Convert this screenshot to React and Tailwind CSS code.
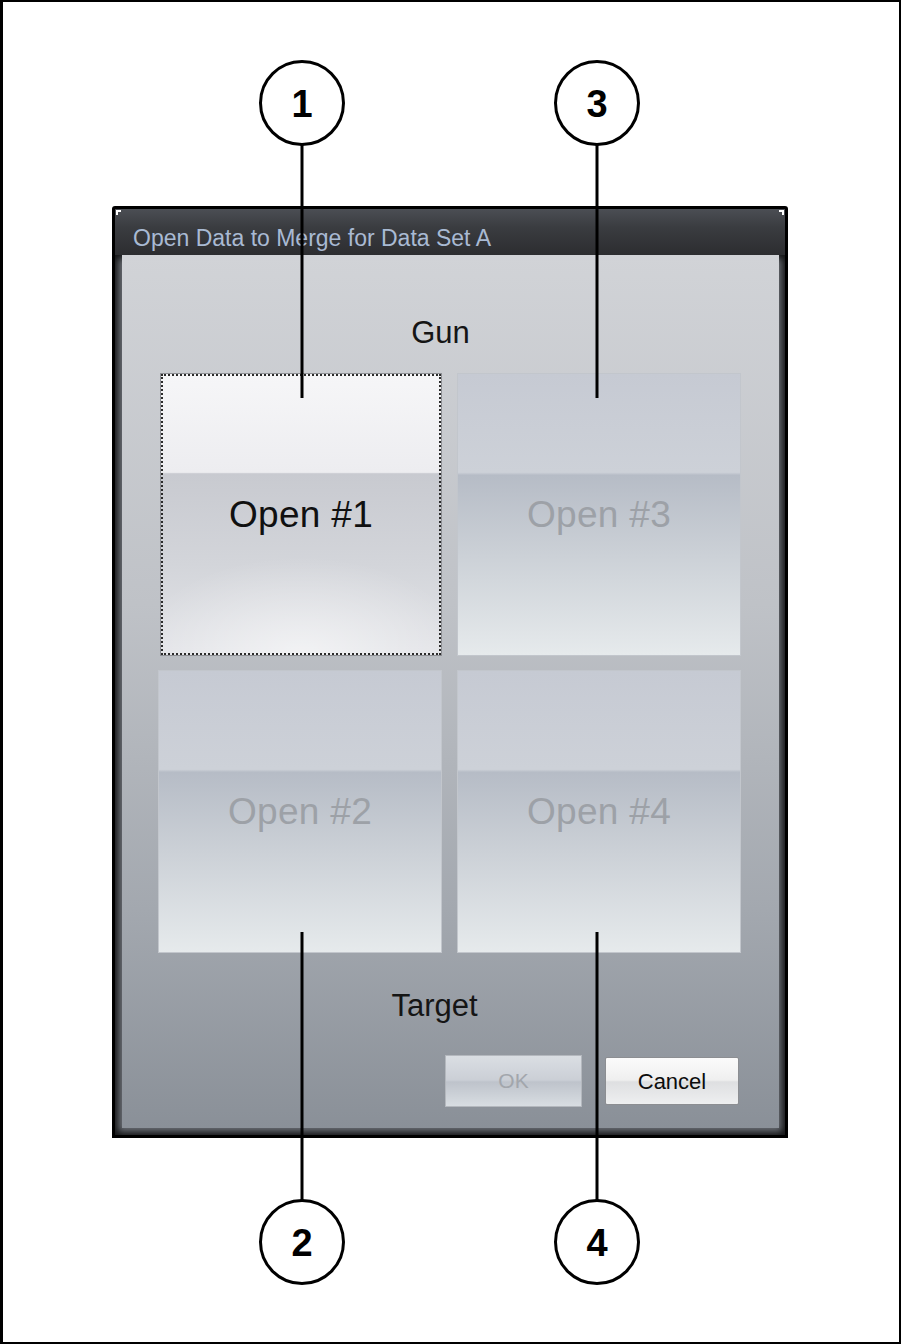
import React from "react";

const font = { fontFamily: '"Liberation Sans", Arial, sans-serif' };

function BigButton({ label, focused }) {
  if (focused) {
    return (
      <div
        className="w-[282px] h-[283px] ml-[2px] flex items-center justify-center border border-[#8d8f94] outline-2 outline-dotted outline-[#2a2a2a] outline-offset-[-3px] text-[37px] tracking-[0.3px] text-[#101010] [background-image:radial-gradient(ellipse_60%_35%_at_50%_100%,rgba(255,255,255,0.55),rgba(255,255,255,0)),linear-gradient(to_bottom,#f6f6f8_0%,#ededf0_35%,#c8cad0_35.5%,#d3d5da_68%,#e3e4e8_100%)]"
      >
        {label}
      </div>
    );
  }
  return (
    <div className="w-[284px] h-[283px] flex items-center justify-center border border-[#c2c6cc] text-[37px] tracking-[0.3px] text-[#9da1a7] [background-image:linear-gradient(to_bottom,#c6cad3_0%,#cdd1d8_35%,#b6bcc6_36%,#ccd1d7_65%,#e6eaec_100%)]">
      {label}
    </div>
  );
}

export default function App() {
  return (
    <div className="relative w-[901px] h-[1344px] bg-white" style={font}>
      <div className="w-full h-full box-border border-2 border-l-[3px] border-black pl-[109px] pt-[204px]">
        {/* Dialog */}
        <div className="relative w-[676px] h-[932px] flex flex-col border-[3px] border-black rounded-t-[3px] bg-[#2e3034]">
          <div className="absolute left-[1px] top-[1px] w-[5px] h-[5px] border-l-2 border-t-2 border-white" />
          <div className="absolute right-[1px] top-[1px] w-[5px] h-[5px] border-r-2 border-t-2 border-white" />
          {/* Title bar */}
          <div className="h-[46px] shrink-0 pl-[18px] pt-[17px] [background-image:linear-gradient(to_bottom,#4b4e54_0%,#3a3c40_40%,#2c2d30_100%)]">
            <div className="text-[23px] leading-[24px] text-[#a9bad3]">
              Open Data to Merge for Data Set A
            </div>
          </div>
          {/* Frame */}
          <div className="flex-1 px-[7px] pb-[7px] bg-[#6a6e75] shadow-[inset_0_0_7px_3px_rgba(0,0,0,0.85)]">
            {/* Panel */}
            <div className="w-[657px] h-[873px] flex flex-col [background-image:linear-gradient(to_bottom,#d1d3d7_0%,#bfc2c7_40%,#a3a8af_75%,#8a9098_100%)]">
              <div className="pt-[60px] text-center text-[31px] leading-[36px] text-[#151515] pr-[20px]">
                Gun
              </div>
              <div className="mt-[22px] ml-[36px] grid grid-cols-[284px_284px] gap-x-[15px] gap-y-[14px]">
                <BigButton label="Open #1" focused />
                <BigButton label="Open #3" />
                <BigButton label="Open #2" />
                <BigButton label="Open #4" />
              </div>
              <div className="mt-[35px] text-center text-[31px] leading-[36px] text-[#151515] pr-[32px]">
                Target
              </div>
              <div className="mt-[31px] flex justify-end items-center gap-[23px] pr-[40px]">
                <div className="w-[137px] h-[52px] flex items-center justify-center border border-[#b4b8be] text-[21px] text-[#a2a6ac] [background-image:linear-gradient(to_bottom,#dadee3_0%,#cbcfd6_48%,#bec3cb_52%,#d8dde2_100%)]">
                  OK
                </div>
                <div className="w-[134px] h-[48px] flex items-center justify-center border border-[#8c8e92] rounded-[2px] text-[22px] text-[#0c0c0c] [background-image:linear-gradient(to_bottom,#fbfbfb_0%,#efefef_48%,#dedfe1_52%,#eeeff0_100%)]">
                  Cancel
                </div>
              </div>
            </div>
          </div>
        </div>
      </div>

      {/* Callouts */}
      <svg
        className="absolute left-0 top-0 pointer-events-none"
        width="901"
        height="1344"
        viewBox="0 0 901 1344"
      >
        <g stroke="#000" strokeWidth="3" fill="#fff">
          <line x1="302" y1="145" x2="302" y2="398" />
          <line x1="597" y1="145" x2="597" y2="398" />
          <line x1="302" y1="932" x2="302" y2="1200" />
          <line x1="597" y1="932" x2="597" y2="1200" />
          <circle cx="302" cy="103" r="41.5" />
          <circle cx="597" cy="103" r="41.5" />
          <circle cx="302" cy="1242" r="41.5" />
          <circle cx="597" cy="1242" r="41.5" />
        </g>
        <g
          fill="#000"
          fontFamily='"Liberation Sans", Arial, sans-serif'
          fontWeight="700"
          fontSize="38"
          textAnchor="middle"
        >
          <text x="302" y="117">1</text>
          <text x="597" y="117">3</text>
          <text x="302" y="1256">2</text>
          <text x="597" y="1256">4</text>
        </g>
      </svg>
    </div>
  );
}
